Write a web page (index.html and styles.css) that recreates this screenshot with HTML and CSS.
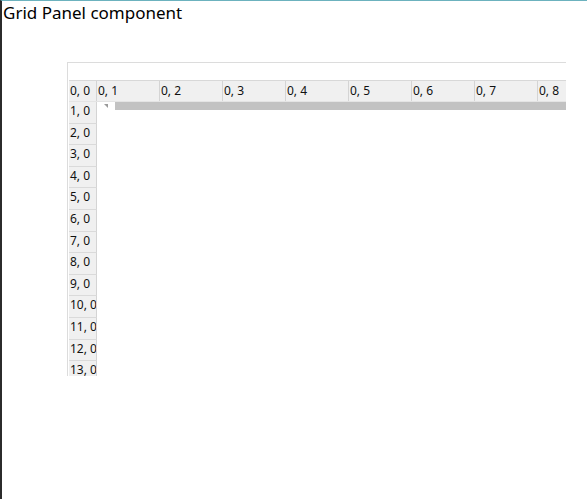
FILE: index.html
```html
<!DOCTYPE html>
<html lang="en">
<head>
    <meta charset="UTF-8">
    <title>Grid Panel component</title>

    <link rel="stylesheet" href="styles.css">
</head>
<body>

    <div id="frame">
        <h1 class="title">Grid Panel component</h1>

        <div class="gridpanel">
            <div class="toolbar"></div>

            <div class="colheads">
                <div class="corner">0, 0</div>
                <div class="colhead">0, 1</div>
                <div class="colhead">0, 2</div>
                <div class="colhead">0, 3</div>
                <div class="colhead">0, 4</div>
                <div class="colhead">0, 5</div>
                <div class="colhead">0, 6</div>
                <div class="colhead">0, 7</div>
                <div class="colhead">0, 8</div>
            </div>

            <div class="gridbody">
                <div class="rowheads">
                    <div class="rowhead">1, 0</div>
                    <div class="rowhead">2, 0</div>
                    <div class="rowhead">3, 0</div>
                    <div class="rowhead">4, 0</div>
                    <div class="rowhead">5, 0</div>
                    <div class="rowhead">6, 0</div>
                    <div class="rowhead">7, 0</div>
                    <div class="rowhead">8, 0</div>
                    <div class="rowhead">9, 0</div>
                    <div class="rowhead">10, 0</div>
                    <div class="rowhead">11, 0</div>
                    <div class="rowhead">12, 0</div>
                    <div class="rowhead">13, 0</div>
                </div>
                <div class="cells">
                    <div class="hscroll">
                        <span class="grip"></span>
                        <span class="thumb"></span>
                    </div>
                </div>
            </div>
        </div>
    </div>

</body>
</html>
```

FILE: styles.css
```css
html, body {
    margin: 0;
    padding: 0;
    height: 100%;
    background: #fff;
}

body {
    font-family: "Noto Sans", "Open Sans", sans-serif;
    overflow: hidden;
}

#frame {
    height: 100%;
    box-sizing: border-box;
    border-left: 2px solid #2b2b2b;
    border-top: 1px solid #6cb2be;
}

.title {
    margin: 0;
    padding-left: 1px;
    font-size: 17px;
    font-weight: normal;
    line-height: 23px;
    color: #000;
}

.gridpanel {
    margin: 38px 0 0 65px;
    width: 498px;
    height: 313px;
    overflow: hidden;
    border-top: 1px solid #dcdcdc;
    border-left: 1px solid #dcdcdc;
    font-size: 12px;
    color: #111;
}

.toolbar {
    height: 17px;
}

.colheads {
    display: flex;
    height: 20px;
    margin-left: 1px;
    background: #f0f0f0;
    border-top: 1px solid #d8d8d8;
    border-bottom: 1px solid #e4e4e4;
}

.corner, .colhead {
    flex: none;
    box-sizing: border-box;
    padding-left: 1px;
    line-height: 19px;
    border-right: 1px solid #d4d4d4;
    white-space: nowrap;
    overflow: hidden;
}

.corner {
    width: 28px;
}

.colhead {
    width: 63px;
}

.gridbody {
    display: flex;
    margin-left: 1px;
}

.rowheads {
    flex: none;
    width: 28px;
}

.rowhead {
    box-sizing: border-box;
    height: 21.6px;
    padding-left: 1px;
    line-height: 17px;
    background: #f0f0f0;
    border-right: 1px solid #d4d4d4;
    border-bottom: 1px solid #dadada;
    white-space: nowrap;
    overflow: hidden;
}

.cells {
    flex: 1;
}

.hscroll {
    display: flex;
    align-items: flex-start;
    height: 9px;
}

.grip {
    width: 0;
    height: 0;
    margin: 2px 0 0 7px;
    border-left: 4px solid transparent;
    border-top: 4px solid #9a9a9a;
}

.thumb {
    flex: 1;
    height: 8px;
    margin-left: 7px;
    background: #c2c2c2;
}
```
